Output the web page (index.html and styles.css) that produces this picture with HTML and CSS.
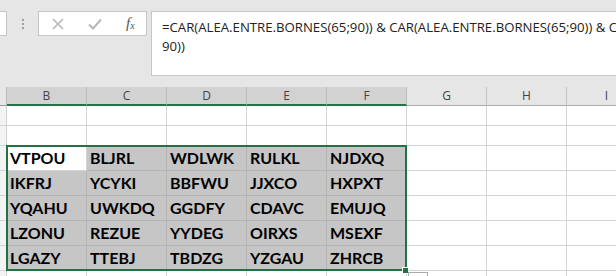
FILE: index.html
```html
<!DOCTYPE html>
<html>
<head>
<meta charset="utf-8">
<link rel="stylesheet" href="styles.css">
</head>
<body>
<div class="top">
  <div class="namebox"></div>
  <div class="grip"><span></span><span></span><span></span></div>
  <div class="fxbox">
    <svg class="ic ic-x" width="12" height="12" viewBox="0 0 12 12"><path d="M1 1 L11 11 M11 1 L1 11" stroke="#b8b8b8" stroke-width="1.6" fill="none"/></svg>
    <svg class="ic ic-ok" width="14" height="12" viewBox="0 0 14 12"><path d="M1 6.5 L5 10.5 L13 1.5" stroke="#b8b8b8" stroke-width="2" fill="none"/></svg>
    <span class="fx">f<sub>x</sub></span>
  </div>
  <div class="formula">=CAR(ALEA.ENTRE.BORNES(65;90)) &amp; CAR(ALEA.ENTRE.BORNES(65;90)) &amp; CAR(ALEA.ENTRE.BORNES(65;<br>90))</div>
</div>
<div class="sheet">
  <div class="hrow">
    <div class="rh"></div>
    <div class="ch sel">B</div><div class="ch sel">C</div><div class="ch sel">D</div><div class="ch sel">E</div><div class="ch sel">F</div>
    <div class="ch">G</div><div class="ch">H</div><div class="ch">I</div>
  </div>
  <div class="row short"><div class="rh"></div><div class="c"></div><div class="c"></div><div class="c"></div><div class="c"></div><div class="c"></div><div class="c"></div><div class="c"></div><div class="c"></div></div>
  <div class="row short"><div class="rh"></div><div class="c"></div><div class="c"></div><div class="c"></div><div class="c"></div><div class="c"></div><div class="c"></div><div class="c"></div><div class="c"></div></div>
  <div class="row"><div class="rh"></div><div class="c d">VTPOU</div><div class="c d s">BLJRL</div><div class="c d s">WDLWK</div><div class="c d s">RULKL</div><div class="c d s">NJDXQ</div><div class="c"></div><div class="c"></div><div class="c"></div></div>
  <div class="row"><div class="rh"></div><div class="c d s">IKFRJ</div><div class="c d s">YCYKI</div><div class="c d s">BBFWU</div><div class="c d s">JJXCO</div><div class="c d s">HXPXT</div><div class="c"></div><div class="c"></div><div class="c"></div></div>
  <div class="row"><div class="rh"></div><div class="c d s">YQAHU</div><div class="c d s">UWKDQ</div><div class="c d s">GGDFY</div><div class="c d s">CDAVC</div><div class="c d s">EMUJQ</div><div class="c"></div><div class="c"></div><div class="c"></div></div>
  <div class="row"><div class="rh"></div><div class="c d s">LZONU</div><div class="c d s">REZUE</div><div class="c d s">YYDEG</div><div class="c d s">OIRXS</div><div class="c d s">MSEXF</div><div class="c"></div><div class="c"></div><div class="c"></div></div>
  <div class="row"><div class="rh"></div><div class="c d s">LGAZY</div><div class="c d s">TTEBJ</div><div class="c d s">TBDZG</div><div class="c d s">YZGAU</div><div class="c d s">ZHRCB</div><div class="c"></div><div class="c"></div><div class="c"></div></div>
  <div class="row"><div class="rh"></div><div class="c"></div><div class="c"></div><div class="c"></div><div class="c"></div><div class="c"></div><div class="c"></div><div class="c"></div><div class="c"></div></div>
  <div class="selection"></div>
  <div class="handle"></div>
  <div class="qa"></div>
</div>
</body>
</html>
```
FILE: styles.css
```css
html, body {
  margin: 0;
  padding: 0;
  width: 616px;
  height: 276px;
  overflow: hidden;
  background: #ffffff;
}
.top {
  height: 87px;
  box-sizing: border-box;
  background: #e6e6e6;
  display: flex;
  align-items: flex-start;
  padding-top: 11px;
  overflow: hidden;
}
.namebox {
  flex: none;
  width: 6px;
  height: 23px;
  background: #fff;
  border: 1px solid #c6c6c6;
  border-left: none;
}
.grip {
  flex: none;
  width: 31px;
  height: 25px;
  display: flex;
  flex-direction: column;
  align-items: center;
  justify-content: center;
  gap: 2px;
}
.grip span {
  display: block;
  width: 2px;
  height: 2px;
  background: #a0a0a0;
}
.fxbox {
  flex: none;
  width: 107px;
  height: 23px;
  background: #fff;
  border: 1px solid #c6c6c6;
  display: flex;
  align-items: center;
}
.ic-x { margin-left: 13px; }
.ic-ok { margin-left: 24px; }
.fx {
  margin-left: 24px;
  font-family: "Liberation Serif", serif;
  font-style: italic;
  font-size: 15px;
  color: #555;
  line-height: 1;
}
.fx sub {
  font-size: 10px;
  vertical-align: -1px;
}
.formula {
  flex: none;
  margin-left: 4px;
  width: 520px;
  background: #fff;
  border: 1px solid #c6c6c6;
  padding: 6px 0 0 10px;
  height: 57px;
  font-family: "Open Sans", sans-serif;
  font-size: 13.2px;
  line-height: 19px;
  color: #222;
  white-space: nowrap;
  overflow: hidden;
}
.sheet {
  position: relative;
  font-family: Lato, sans-serif;
}
.hrow {
  display: flex;
  height: 19px;
}
.hrow .rh {
  flex: none;
  width: 7px;
  box-sizing: border-box;
  background: #e6e6e6;
  border-right: 1px solid #bdbdbd;
  border-bottom: 1px solid #9b9b9b;
}
.ch {
  flex: none;
  width: 80px;
  box-sizing: border-box;
  border-right: 1px solid #c4c4c4;
  border-bottom: 1px solid #ababab;
  background: #e6e6e6;
  color: #444;
  font-family: "Open Sans", sans-serif;
  font-size: 12px;
  text-align: center;
  line-height: 18px;
}
.ch.sel {
  background: #d2d2d2;
  border-bottom: 2px solid #217346;
  border-right-color: #bdbdbd;
  line-height: 17px;
}
.row {
  display: flex;
  height: 25px;
}
.row.short { height: 20px; }
.row .rh {
  flex: none;
  width: 7px;
  box-sizing: border-box;
  background: #f3f3f3;
  border-right: 1px solid #d0d0d0;
  border-bottom: 1px solid #d4d4d4;
}
.c {
  flex: none;
  width: 80px;
  box-sizing: border-box;
  border-right: 1px solid #d4d4d4;
  border-bottom: 1px solid #d4d4d4;
  background: #fff;
}
.c.d {
  font-weight: 700;
  font-size: 16px;
  color: #000;
  padding-left: 3px;
  line-height: 24px;
}
.c.s {
  background: #c6c6c6;
  border-color: #b4b4b4;
}
.selection {
  position: absolute;
  left: 6px;
  top: 58px;
  width: 401px;
  height: 126px;
  box-sizing: border-box;
  border: 2px solid #217346;
  pointer-events: none;
}
.handle {
  position: absolute;
  left: 402px;
  top: 180px;
  width: 5px;
  height: 5px;
  background: #217346;
  border: 1px solid #fff;
}
.qa {
  position: absolute;
  left: 408px;
  top: 185px;
  width: 18px;
  height: 10px;
  border: 1px solid #ababab;
  background: #fff;
}
```
